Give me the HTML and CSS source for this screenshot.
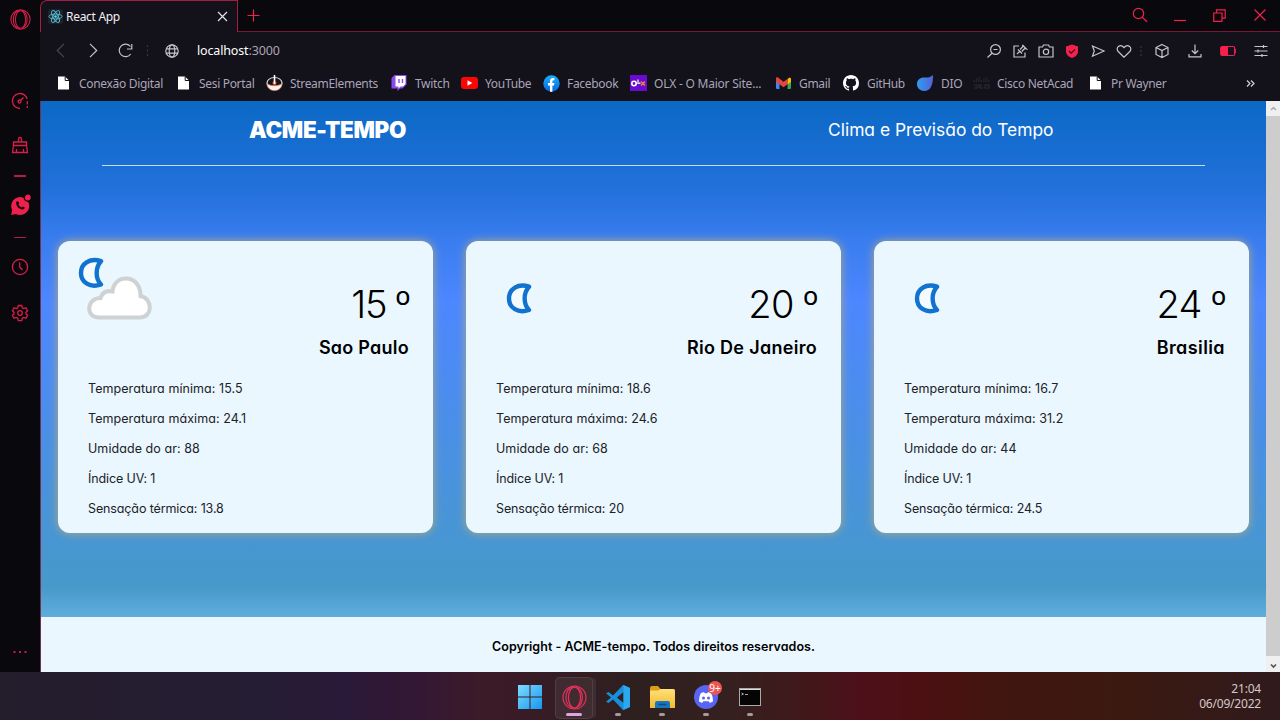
FILE: index.html
```html
<!DOCTYPE html>
<html lang="pt-BR">
<head>
<meta charset="utf-8">
<title>React App</title>
<link rel="stylesheet" href="styles.css">
</head>
<body>
<svg class="defs" width="0" height="0">
  <defs>
    <linearGradient id="win" x1="0" y1="0" x2="1" y2="1"><stop offset="0" stop-color="#7fdcff"/><stop offset="1" stop-color="#1597f0"/></linearGradient>
    <linearGradient id="fb" x1="0" y1="0" x2="0" y2="1"><stop offset="0" stop-color="#1ab0fb"/><stop offset="1" stop-color="#0866e0"/></linearGradient>
    <linearGradient id="dio" x1="0" y1="0" x2="1" y2="0"><stop offset="0" stop-color="#2f9cf0"/><stop offset="1" stop-color="#5363d8"/></linearGradient>
    <linearGradient id="fold" x1="0" y1="0" x2="0" y2="1"><stop offset="0" stop-color="#ffe07a"/><stop offset="1" stop-color="#f6b92c"/></linearGradient>
    <symbol id="moon" viewBox="0 0 26 32">
      <path d="M23 4.200C12 .6 3 6.500 3 16S12 31.200 23 27.500C17.200 21.500 17.200 10.500 23 4.200Z" fill="#f4fbff" stroke="#1173cf" stroke-width="4.400" stroke-linejoin="round"/>
    </symbol>
    <symbol id="page" viewBox="0 0 12 14"><path d="M0 .5h7l4 4V13.500H0Z" fill="#fff"/><path d="M7.200 .5v4h4" fill="none" stroke="#13111a"/></symbol>
    <symbol id="opera" viewBox="0 0 24 24"><g fill="none" stroke="currentColor" stroke-width="1.200"><circle cx="12" cy="12" r="11"/><ellipse cx="12" cy="12" rx="5.800" ry="10"/><path d="M11 1.500C5.500 3 3.800 8 3.800 12s2 9 7.200 10.500M14.500 2.500c4 2 5 6 5 9.500s-1 7.500-5 9.500"/></g></symbol>
  </defs>
</svg>
<div class="window">
  <nav class="sidebar">
    <svg class="s-opera" width="21" height="21"><use href="#opera"/></svg>
    <svg class="s-gauge" width="18" height="18" viewBox="0 0 18 18"><path d="M9 16.500A7.500 7.500 0 1 1 16.200 7" /><circle cx="8.500" cy="9.500" r="1.500"/><path d="M9.500 8.500l3-3M16.300 9v3.500M16.300 14v2"/></svg>
    <svg class="s-brush" width="18" height="18" viewBox="0 0 18 18"><path d="M7.500 6V3a1.500 1.500 0 0 1 3 0v3M2.500 9.500V6h13v3.500M2.500 9.500h13l1 7h-15ZM5.500 16v-3M12.500 16v-3"/></svg>
    <i class="dash d1"></i>
    <svg class="s-whats" width="21" height="22" viewBox="0 0 21 22"><path d="M1 21l1.200-4.800A9 9 0 1 1 6 20Z" fill="#f01f4c" stroke="none"/><path d="M6.200 8.500c.3-1.300 1.700-1.800 2.200-.8l.8 1.600-.8 1.300c.8 1.500 1.800 2.300 3.200 2.900l1.200-1 2 1.100c-.4 2-2.200 2.300-4.300 1.400-2.400-1-4.600-3.800-4.300-6.500Z" fill="#09090d" stroke="none"/><circle cx="17.800" cy="3.500" r="3.600" fill="#f01f4c" stroke="#09090d"/></svg>
    <i class="dash d2"></i>
    <svg class="s-clock" width="18" height="18" viewBox="0 0 18 18"><circle cx="9" cy="9" r="7.600"/><path d="M8.700 4.500V9l2.800 3"/></svg>
    <svg class="s-gear" width="18" height="18" viewBox="0 0 18 18"><path d="M7.300 1.500h3.400l.6 2.300 1.400.8 2.300-.7 1.600 2.900-1.700 1.600v1.300l1.700 1.600-1.600 2.900-2.300-.7-1.400.8-.6 2.300H7.300l-.6-2.300-1.400-.8-2.300.7-1.600-2.900 1.700-1.600V8.400L1.400 6.800 3 3.900l2.300.7 1.400-.8Z"/><circle cx="9" cy="9" r="2.300"/></svg>
    <svg class="s-more" width="16" height="4" viewBox="0 0 16 4"><path d="M1.500 1h2v2h-2ZM7 1h2v2H7ZM12.500 1h2v2h-2Z" fill="#d01a46" stroke="none"/></svg>
  </nav>
  <div class="browser">
    <header class="tabs">
      <div class="tab">
        <svg width="15" height="15" viewBox="0 0 15 15"><rect width="15" height="15" rx="2" fill="#1d2328"/><g fill="none" stroke="#55b9d2" stroke-width=".9"><ellipse cx="7.500" cy="7.500" rx="6.600" ry="2.500"/><ellipse cx="7.500" cy="7.500" rx="6.600" ry="2.500" transform="rotate(60 7.500 7.500)"/><ellipse cx="7.500" cy="7.500" rx="6.600" ry="2.500" transform="rotate(120 7.500 7.500)"/></g><circle cx="7.500" cy="7.500" r="1.300" fill="#61dafb"/></svg>
        <span class="tab-title">React App</span>
        <svg class="tab-close" width="11" height="11" viewBox="0 0 11 11"><path d="M1 1l9 9M10 1l-9 9" stroke="#e4e2ea" stroke-width="1.200"/></svg>
      </div>
      <div class="strip">
        <svg class="plus" width="13" height="13" viewBox="0 0 13 13"><path d="M6.500 .5v12M.5 6.500h12"/></svg>
        <svg class="find" width="16" height="16" viewBox="0 0 16 16"><circle cx="6.500" cy="6.500" r="5.200"/><path d="M10.300 10.300l4.700 4.500"/></svg>
        <svg class="min" width="12" height="14" viewBox="0 0 12 14"><path d="M0 12.500h12"/></svg>
        <svg class="max" width="13" height="13" viewBox="0 0 13 13"><path d="M.7 4h8.300v8.300H.7ZM3.500 4V.8h8.700v8.400H9"/></svg>
        <svg class="close" width="12" height="12" viewBox="0 0 12 12"><path d="M.5 .5l11 11M11.500 .5l-11 11"/></svg>
      </div>
    </header>
    <div class="address">
      <svg class="back" width="9" height="15" viewBox="0 0 9 15"><path d="M8 .8L1.300 7.500 8 14.200"/></svg>
      <svg class="fwd" width="9" height="15" viewBox="0 0 9 15"><path d="M1 .8l6.700 6.700L1 14.200"/></svg>
      <svg class="reload" width="15" height="15" viewBox="0 0 15 15"><path d="M12.700 11A6.300 6.300 0 1 1 12.500 3.500M13.800 1v5H9"/></svg>
      <svg class="sep" width="3" height="11" viewBox="0 0 3 11"><path d="M1.500 0v2M1.500 4.500v2M1.500 9v2"/></svg>
      <svg class="globe" width="14" height="14" viewBox="0 0 14 14"><circle cx="7" cy="7" r="6.200"/><ellipse cx="7" cy="7" rx="2.800" ry="6.200"/><path d="M1.200 4.800h11.600M1.200 9.200h11.600"/></svg>
      <span class="url">localhost<span class="port">:3000</span></span>
      <div class="tools">
        <svg viewBox="0 0 16 16"><circle cx="9.500" cy="6.500" r="4.900"/><path d="M6 10.200L1.500 14.500M7.500 6.500h4"/></svg>
        <svg viewBox="0 0 16 16"><path d="M7 3H2v11h11V9.500M5 11l3.200-3.200M6 6.500l4 4M8 6.500l3-3-.5-1.500 4 4-1.800-.5-3 3"/></svg>
        <svg viewBox="0 0 16 16"><path d="M1 4h3.500l1-2h5l1 2H15v10H1Z"/><circle cx="8" cy="8.800" r="2.700"/></svg>
        <svg viewBox="0 0 16 16"><path d="M8 1.500l6 2v5c0 3.500-3 5.500-6 6.500-3-1-6-3-6-6.500v-5Z" fill="#f5204e" stroke="none"/><path d="M5 8l2.200 2.200L11 6.300" stroke="#321020"/></svg>
        <svg viewBox="0 0 16 16"><path d="M2.500 3L14 8 2.500 13.200 4.300 8Z"/></svg>
        <svg viewBox="0 0 16 16"><path d="M8 14.200L2.200 8.500C-1 5 4 0 8 4.500c4-4.500 9 .5 5.800 4Z"/></svg>
        <svg class="dots" viewBox="0 0 16 16"><path d="M8 3v2M8 7v2M8 11v2" stroke="#393542"/></svg>
        <svg viewBox="0 0 16 16"><path d="M8 1.500l6 3v7l-6 3-6-3v-7ZM2 4.500l6 3 6-3M8 7.500v7"/></svg>
        <svg viewBox="0 0 16 16"><path d="M8 1.500v9M4.800 7.500L8 10.700l3.200-3.200M2 11v2.800h12V11"/></svg>
        <svg viewBox="0 0 16 16"><rect x=".7" y="3.500" width="14" height="9" rx="1.500" stroke="#f5204e"/><path d="M1 4h7v8H1ZM14.500 6h1.300v4h-1.300Z" fill="#f5204e" stroke="none"/></svg>
        <svg viewBox="0 0 16 16"><path d="M1.500 3.500h13M1.500 8h13M1.500 12.500h13M10.500 2v3M5 6.500v3M9 11v3"/></svg>
      </div>
    </div>
    <div class="bookmarks">
      <div class="bm"><svg width="12" height="14"><use href="#page"/></svg><span>Conexão Digital</span></div>
      <div class="bm"><svg width="12" height="14"><use href="#page"/></svg><span>Sesi Portal</span></div>
      <div class="bm"><svg width="17" height="16" viewBox="0 0 17 16"><ellipse cx="8.500" cy="8" rx="7.500" ry="5.500" fill="#17131b" stroke="#ddd" stroke-width="1.200"/><path d="M1 8.500c3 3 12 3 15 0 0 4-3 7-7.500 7S1 12.500 1 8.500Z" fill="#fff2e8" stroke="#e08b72" stroke-width=".8"/><circle cx="8.500" cy="8" r="2" fill="#da543e"/><path d="M8.500 0v9" stroke="#fff" stroke-width="1.600"/></svg><span>StreamElements</span></div>
      <div class="bm"><svg width="16" height="16" viewBox="0 0 15 16"><path d="M3 0h12v9.500l-4 4H8.500L6 16v-2.500H0V3Z" fill="#8b49ee"/><path d="M4 1h10v8l-2.500 2.500H9L7 13.500v-2H4Z" fill="#fff"/><path d="M7.500 4v4M11 4v4" stroke="#8b49ee" stroke-width="1.400"/></svg><span>Twitch</span></div>
      <div class="bm"><svg width="17" height="12" viewBox="0 0 17 12"><rect width="17" height="12" rx="3" fill="#fb0505"/><path d="M6.500 3.300v5.400L11.300 6Z" fill="#fff"/></svg><span>YouTube</span></div>
      <div class="bm"><svg width="17" height="17" viewBox="0 0 17 17"><circle cx="8.500" cy="8.500" r="8.200" fill="url(#fb)"/><path d="M7 16.700V10.500H5V8h2V6.300c0-2.300 1.500-3.500 4.400-3.100v2c-1.600-.1-2 .4-2 1.300V8h2L11 10.500H9.400v6.200Z" fill="#fff"/></svg><span>Facebook</span></div>
      <div class="bm"><svg width="17" height="16" viewBox="0 0 17 16"><path d="M0 0h17v16H0Z" fill="#6b0bd2"/><circle cx="4" cy="8.500" r="2.200" fill="none" stroke="#fff" stroke-width="1.600"/><path d="M8 4.500v3.700h2.500" fill="none" stroke="#ddd" stroke-width="1.400"/><path d="M11 6.500l4 4M15 6.500l-4 4" stroke="#f2822b" stroke-width="1.600"/></svg><span class="olx">OLX - O Maior Site...</span></div>
      <div class="bm"><svg width="15" height="12" viewBox="0 0 15 12"><path d="M0 1.500L3.500 4v8H1a1 1 0 0 1-1-1Z" fill="#4285f4"/><path d="M15 1.500L11.500 4v8H14a1 1 0 0 0 1-1Z" fill="#34a853"/><path d="M11.500 2L13.500 .5 15 1.500V5l-3.500 2.500Z" fill="#fbbc04"/><path d="M0 1.500C0 .2 1.500 0 2.300.8l5.200 4L11.500 2v5.200l-4 3-4-3L0 4.500Z" fill="#e8453a"/></svg><span>Gmail</span></div>
      <div class="bm"><svg width="16" height="16" viewBox="0 0 16 16"><path d="M8 0C3.580 0 0 3.580 0 8c0 3.540 2.290 6.530 5.470 7.590.4.070.55-.17.55-.38 0-.19-.01-.82-.01-1.490-2.010.37-2.530-.49-2.690-.94-.09-.23-.48-.94-.82-1.130-.28-.15-.68-.52-.01-.53.63-.01 1.080.58 1.230.82.72 1.210 1.870.87 2.330.66.07-.52.28-.87.51-1.070-1.780-.2-3.640-.89-3.640-3.950 0-.87.31-1.590.82-2.150-.08-.2-.36-1.020.08-2.120 0 0 .67-.21 2.200.82.640-.18 1.320-.27 2-.27s1.360.09 2 .27c1.530-1.040 2.200-.82 2.200-.82.440 1.100.16 1.920.08 2.120.51.56.82 1.270.82 2.150 0 3.070-1.870 3.750-3.650 3.950.29.25.54.73.54 1.480 0 1.070-.01 1.930-.01 2.200 0 .21.15.46.55.38A8.010 8.010 0 0 0 16 8c0-4.420-3.580-8-8-8Z" fill="#fff"/></svg><span>GitHub</span></div>
      <div class="bm"><svg width="16" height="16" viewBox="0 0 16 16"><path d="M16 0c.3 10-2.500 16-8.500 16C3 16 0 12.800 0 9c0-4 3-6.500 7-6.500 4 0 5.500.5 9-2.500Z" fill="url(#dio)"/></svg><span>DIO</span></div>
      <div class="bm"><svg width="17" height="12" viewBox="0 0 17 12"><path d="M1 3v2M3.500 1.500v3.500M6 0v5M8.500 3v2M11 1.500v3.500M13.500 0v5M16 3v2M1 8h3v3H1M6 7v4M9 8H7.500v3H10M12 8h4v3h-4Z" stroke="#26242a" stroke-width="1.400" fill="none"/></svg><span>Cisco NetAcad</span></div>
      <div class="bm"><svg width="12" height="14"><use href="#page"/></svg><span>Pr Wayner</span></div>
      <svg class="chev" width="9" height="7" viewBox="0 0 9 7"><path d="M1 .5l3 3-3 3M5 .5l3 3-3 3" fill="none" stroke="#d5d0dc" stroke-width="1.200"/></svg>
    </div>
    <div class="viewport">
      <main class="page">
        <div class="hero">
          <div class="banner"><h1>ACME-TEMPO</h1><p>Clima e Previsão do Tempo</p></div>
          <section class="cards">
            <article class="card">
              <div class="top">
                <svg class="weather" width="80" height="80" viewBox="0 0 80 80"><use href="#moon" x="0" y="4" width="26" height="32"/><path d="M21 64.500C7 64.500 8.500 45 22.500 45 25 38 30 37.500 34.500 38.500 36 20 63 21 62.500 43 75 45 75 64.500 62 64.500Z" fill="#fff" stroke="#cfd2d3" stroke-width="4"/></svg>
                <div class="place"><div class="temp t1">15 º</div><div class="city c1">Sao Paulo</div></div>
              </div>
              <ul><li>Temperatura mínima: 15.5</li><li>Temperatura máxima: 24.1</li><li>Umidade do ar: 88</li><li class="tight">Índice UV: 1</li><li class="tight">Sensação térmica: 13.8</li></ul>
            </article>
            <article class="card">
              <div class="top">
                <svg class="weather" width="80" height="80" viewBox="0 0 80 80"><use href="#moon" x="20" y="29.500" width="26" height="32"/></svg>
                <div class="place"><div class="temp">20 º</div><div class="city c2">Rio De Janeiro</div></div>
              </div>
              <ul><li>Temperatura mínima: 18.6</li><li>Temperatura máxima: 24.6</li><li>Umidade do ar: 68</li><li class="tight">Índice UV: 1</li><li class="tight">Sensação térmica: 20</li></ul>
            </article>
            <article class="card">
              <div class="top">
                <svg class="weather" width="80" height="80" viewBox="0 0 80 80"><use href="#moon" x="20" y="29.500" width="26" height="32"/></svg>
                <div class="place"><div class="temp">24 º</div><div class="city c3">Brasilia</div></div>
              </div>
              <ul><li>Temperatura mínima: 16.7</li><li>Temperatura máxima: 31.2</li><li>Umidade do ar: 44</li><li class="tight">Índice UV: 1</li><li class="tight">Sensação térmica: 24.5</li></ul>
            </article>
          </section>
        </div>
        <footer>Copyright - ACME-tempo. Todos direitos reservados.</footer>
      </main>
      <div class="scrollbar">
        <svg width="14" height="15" viewBox="0 0 14 15"><path d="M5 9l2.500-2.500L10 9" fill="none" stroke="#aaa" stroke-width="1.500"/></svg>
        <i class="thumb"></i>
        <svg width="14" height="16" viewBox="0 0 14 16"><path d="M5 8.500L7.500 11 10 8.500" fill="none" stroke="#555" stroke-width="1.700"/></svg>
      </div>
    </div>
  </div>
</div>
<div class="taskbar">
  <div class="apps">
    <div class="app"><svg width="24" height="24" viewBox="0 0 24 24"><path d="M0 0h11.500v11.500H0ZM12.500 0H24v11.500H12.500ZM0 12.500h11.500V24H0ZM12.500 12.500H24V24H12.500Z" fill="url(#win)"/></svg></div>
    <div class="app active"><svg class="op" width="25" height="25"><use href="#opera"/></svg><i class="run"></i></div>
    <div class="app"><svg width="24" height="25" viewBox="0 0 24 25"><path d="M17 0l7 3v19l-7 3L7 14.500 2.500 18 0 16.700l5-4.200-5-4.200L2.500 7 7 10.500ZM17.500 7L11 12.500l6.500 5.500Z" fill="#188fd8" fill-rule="evenodd"/><path d="M17.500 0L24 3v19l-6.500 3Z" fill="#2ba8f0"/></svg><i class="run"></i></div>
    <div class="app"><svg width="25" height="24" viewBox="0 0 25 24"><path d="M0 3a2 2 0 0 1 2-2h6l2.500 3H23a2 2 0 0 1 2 2v6H0Z" fill="#dc9f14"/><path d="M0 5.500h8.500L10.500 4H23a2 2 0 0 1 2 2v17H0Z" fill="url(#fold)"/><path d="M5 23v-5a2 2 0 0 1 2-2h11a2 2 0 0 1 2 2v5Z" fill="#1677bd"/><path d="M8.500 19.500h8" stroke="#0b4a80" stroke-width="1.500"/></svg><i class="run"></i></div>
    <div class="app"><svg width="24" height="24" viewBox="0 0 24 24"><circle cx="12" cy="12" r="12" fill="#5865f2"/><path d="M5 16.500c0-4 1-7 2-8.500L10 7l.7 1.200h2.600L14 7l3 1c1 1.500 2 4.500 2 8.500l-3.200 1.500-1-1.700H9.200l-1 1.700Z" fill="#fff"/><circle cx="9.500" cy="13" r="1.500" fill="#5865f2"/><circle cx="14.500" cy="13" r="1.500" fill="#5865f2"/></svg><b class="badge">9+</b><i class="run"></i></div>
    <div class="app"><svg width="22" height="18" viewBox="0 0 22 18"><rect x=".5" y=".5" width="21" height="17" fill="#050505" stroke="#aaa"/><path d="M1 1.500h20" stroke="#ddd"/><path d="M2.500 5l2 1-2 1M6 6.500h3" fill="none" stroke="#ccc" stroke-width=".8"/></svg><i class="run"></i></div>
  </div>
  <div class="clock"><span>21:04</span><span>06/09/2022</span></div>
</div>
</body>
</html>
```

FILE: styles.css
```css
* { box-sizing: border-box; }
body { margin: 0; width: 1280px; height: 720px; overflow: hidden; display: flex; flex-direction: column; background: #09090d; font-family: "Noto Sans", "Open Sans", sans-serif; }
.defs { position: absolute; }
svg { display: block; flex: none; }
.window { display: flex; height: 672px; }

.sidebar { width: 40px; display: flex; flex-direction: column; align-items: center; background: #09090d; color: #d91e49; }
.sidebar svg { fill: none; stroke: #d91e49; stroke-width: 1.3; }
.sidebar .s-opera { margin-top: 9px; }
.s-gauge { margin-top: 62px; }
.s-brush { margin-top: 26px; }
.dash { width: 12px; height: 1px; background: #b51c42; }
.d1 { margin-top: 21px; height: 2px; }
.s-whats { margin-top: 17px; }
.d2 { margin-top: 21px; }
.s-clock { margin-top: 20px; }
.s-gear { margin-top: 28px; }
.s-more { margin-top: auto; margin-bottom: 18px; }

.browser { width: 1240px; display: flex; flex-direction: column; background: #13111a; }
.tabs { height: 32px; display: flex; background: #09090d; }
.tab { width: 198px; height: 32px; display: flex; align-items: center; padding: 0 0 1px 7px; background: #13111a; border: 1px solid #a51d41; border-bottom: 0; border-top-left-radius: 7px; }
.tab-title { margin-left: 3px; font-size: 12px; color: #f0eef4; letter-spacing: -.3px; }
.tab-close { margin-left: auto; margin-right: 9px; }
.strip { flex: 1; display: flex; padding-left: 9px; border-bottom: 1px solid #7c1834; }
.strip svg { fill: none; stroke: #ef214e; stroke-width: 1.2; }
.plus { margin-top: 9px; }
.find { margin-left: 872px; margin-top: 7px; }
.min { margin-left: 26px; margin-top: 8px; }
.max { margin-left: 27px; margin-top: 9px; }
.close { margin-left: 28px; margin-top: 9px; }

.address { height: 37px; display: flex; align-items: center; padding-left: 16px; }
.address svg { fill: none; stroke: #c7c2d0; stroke-width: 1.2; }
.address .back { stroke: #4a4652; }
.fwd { margin-left: 24px; }
.reload { margin-left: 20px; }
.address .sep { margin-left: 13px; stroke: #393542; }
.globe { margin-left: 16px; }
.url { margin-left: 18px; width: 90px; font-size: 12.5px; letter-spacing: -.15px; color: #fff; white-space: nowrap; }
.port { color: #aaa5b5; }
.tools { display: flex; margin-left: 706px; }
.tools svg { width: 16px; height: 16px; margin-right: 10px; }
.tools .dots { width: 16px; margin-left: -9px; margin-right: 5px; }
.tools svg:nth-child(n+8) { margin-right: 17px; }

.bookmarks { height: 32px; display: grid; grid-template-columns: 120px 89px 125px 70px 82px 87px 146px 67px 74px 56px 116px 157px 20px; align-items: center; padding: 0 0 4px 17px; }
.bm { display: flex; align-items: center; gap: 8px; font-size: 12px; color: #aaa5b8; white-space: nowrap; letter-spacing: -.32px; }
.bm svg[width="12"] { margin-left: 1px; margin-right: 1px; }
.bm svg[width="17"] { margin-right: -1px; }
.olx { letter-spacing: -.22px; }

.viewport { flex: 1; display: flex; border-left: 1px solid #713054; }
.page { width: 1225px; display: flex; flex-direction: column; font-family: Inter, sans-serif; font-feature-settings: "cv11"; color: #000; }
.hero { height: 516px; background: linear-gradient(#0b69c5 0, #2270da 17%, #397df0 27%, #4c87ff 39%, #4799ca 94%, #60addc 100%); }
.banner { width: 1103px; height: 65px; margin-left: 61px; padding: 0 151px 0 147px; display: flex; justify-content: space-between; border-bottom: 1px solid #c5dcf0; color: #fff; }
h1 { margin: 0; width: 160px; line-height: 57px; font-size: 22.4px; font-weight: 900; letter-spacing: -.3px; white-space: nowrap; }
.banner p { margin: 0; width: 226px; line-height: 57px; font-size: 17.4px; white-space: nowrap; }
.cards { display: grid; grid-template-columns: repeat(3, 375px); justify-content: space-between; margin: 75px 17px 0; }
.card { height: 292px; padding: 0 24px 0 20px; border-radius: 12px; background: #eaf7ff; box-shadow: 0 0 10px #b5aa80; }
.top { display: flex; justify-content: space-between; height: 132px; }
.weather { margin-top: 12px; }
.place { padding-top: 36px; text-align: right; white-space: nowrap; }
.temp { height: 54px; line-height: 54px; font-size: 38px; font-weight: 300; letter-spacing: -.8px; word-spacing: -1px; margin-right: -1px; }
.t1 { letter-spacing: -1.2px; }
.city { height: 32px; line-height: 33px; font-size: 18px; font-weight: 600; }
.c1 { letter-spacing: .25px; }
.c2 { letter-spacing: .3px; }
.c3 { letter-spacing: .4px; }
ul { margin: 0; padding: 0 0 0 10px; list-style: none; color: #1c2226; }
li { height: 30px; line-height: 31px; font-size: 12.5px; letter-spacing: .07px; }
.tight { letter-spacing: -.12px; }
footer { height: 55px; line-height: 59px; text-align: center; background: #eaf7ff; font-size: 12.5px; font-weight: 600; letter-spacing: .03px; }
.scrollbar { width: 14px; display: flex; flex-direction: column; background: #f0f0f0; }
.thumb { flex: 1; background: #cdcdcd; }

.taskbar { height: 48px; display: grid; grid-template-columns: 508px 264px 1fr; background: linear-gradient(90deg, #241d2c 0, #251d33 21%, #2a1939 27%, #341833 33%, #3c1b28 38%, #351c25 43%, #2e201f 50%, #35201f 57%, #431619 64%, #4d101a 67%, #4c1012 72%, #401710 79%, #3b1911 88%, #301a1c 100%); }
.apps { grid-column: 2; display: flex; }
.app { position: relative; width: 44px; height: 48px; display: flex; align-items: center; justify-content: center; padding-top: 2px; }
.active::before { content: ""; position: absolute; left: 3px; top: 5px; width: 36px; height: 40px; border: 1px solid #ffffff18; border-radius: 5px; background: #ffffff10; box-shadow: 4px 0 0 -1px #ffffff12; }
.op { color: #e0244e; }
.run { position: absolute; left: 19px; bottom: 4px; width: 6px; height: 3px; border-radius: 2px; background: #a59a9d; }
.active .run { left: 14px; width: 16px; background: #dfa3e2; }
.badge { position: absolute; right: 6px; top: 9px; width: 14px; height: 14px; border-radius: 7px; background: #ec5555; color: #fff; font-size: 10px; font-weight: 400; line-height: 14px; text-align: center; }
.clock { display: flex; flex-direction: column; align-items: flex-end; padding: 9px 19px 0 0; font-size: 12px; line-height: 15px; color: #d3c8c9; letter-spacing: -.2px; }
```
